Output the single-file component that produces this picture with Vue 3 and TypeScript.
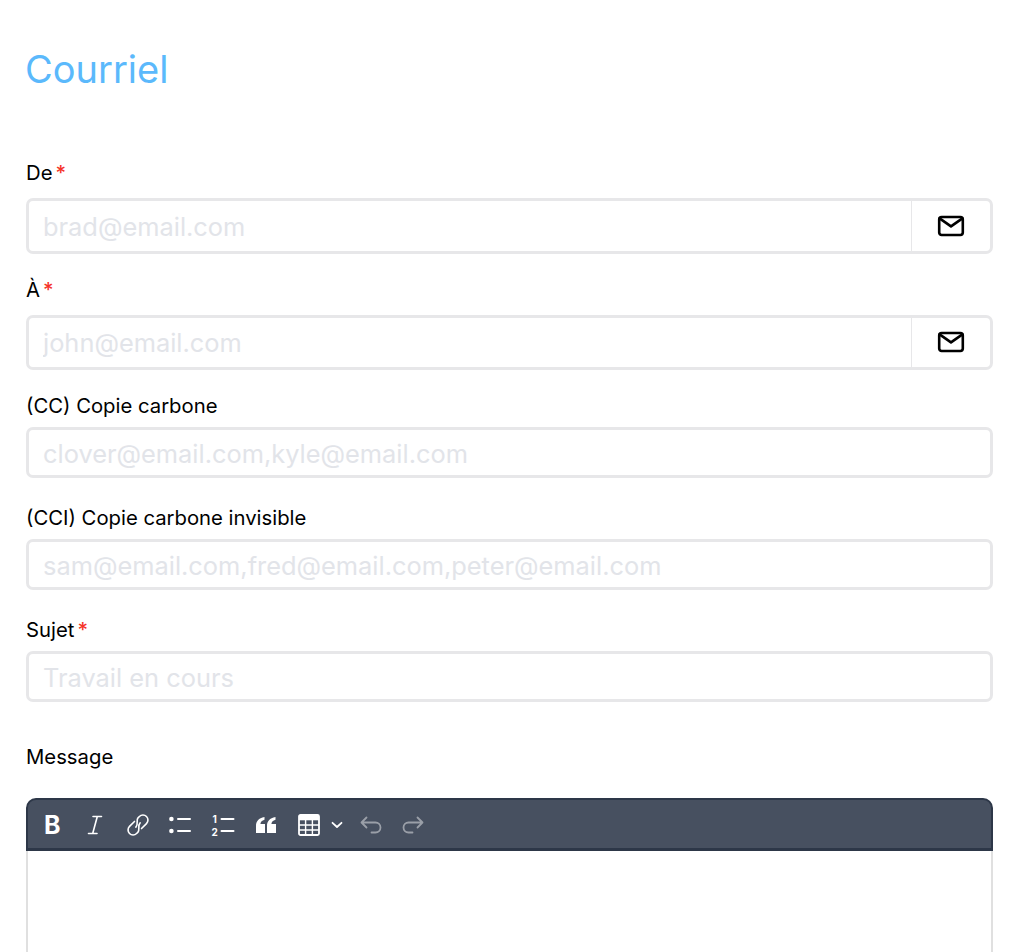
<template>
  <div class="page">
    <h1 class="title">Courriel</h1>
    <form class="form" @submit.prevent>
      <div v-for="field in fields" :key="field.label" class="field" :class="{ 'field-mail': field.mail }">
        <label class="label">{{ field.label }}<span v-if="field.required" class="required">*</span></label>
        <div class="control">
          <input class="input" type="text" :placeholder="field.placeholder">
          <span v-if="field.mail" class="addon">
            <svg width="28" height="22" viewBox="0 0 28 22" fill="none" stroke="#000" stroke-width="2.6" stroke-linejoin="round" stroke-linecap="round">
              <rect x="2.2" y="2" width="23.6" height="18" rx="2.4" />
              <path d="M2.6 3.4 14 11.4 25.4 3.4" />
            </svg>
          </span>
        </div>
      </div>
      <div class="editor-field">
        <label class="label">Message</label>
        <div class="editor">
          <div class="toolbar">
            <button type="button" class="tool tool-bold">B</button>
            <button type="button" class="tool">
              <svg width="22" height="22" viewBox="0 0 22 22" fill="none" stroke="#fff" stroke-width="1.6" stroke-linecap="round">
                <path d="M9 2.5h8.5M4.5 19.5H13M13.3 2.5 8.7 19.5" />
              </svg>
            </button>
            <button type="button" class="tool tool-link">
              <svg width="22" height="22" viewBox="0 0 22 22" fill="none" stroke="#fff" stroke-width="1.6" stroke-linecap="round" stroke-linejoin="round">
                <g transform="rotate(45 11 11)">
                  <path d="M16 11V4A5 5 0 0 0 6 4V6C6 9 11 10 11 14" />
                  <path d="M6 11V18A5 5 0 0 0 16 18V16C16 13 11 12 11 8" />
                </g>
              </svg>
            </button>
            <button type="button" class="tool">
              <svg width="24" height="18" viewBox="0 0 24 18" fill="#fff" stroke="none">
                <circle cx="3.4" cy="3" r="2.3" />
                <circle cx="3.4" cy="15" r="2.3" />
                <rect x="9" y="2" width="14" height="2" rx="1" />
                <rect x="9" y="14" width="14" height="2" rx="1" />
              </svg>
            </button>
            <button type="button" class="tool">
              <svg width="24" height="26" viewBox="0 0 24 26" fill="#fff" stroke="none">
                <text x="1.5" y="11" class="num">1</text>
                <text x="0.5" y="23.5" class="num">2</text>
                <rect x="9.5" y="6" width="14" height="2" rx="1" />
                <rect x="9.5" y="18" width="14" height="2" rx="1" />
              </svg>
            </button>
            <button type="button" class="tool tool-quote">
              <svg width="22" height="18" viewBox="0 0 22 18" fill="#fff" stroke="none">
                <path d="M1 10C1 5.5 3.5 2 9.5 1v2.8C7 4.5 5.6 6 5.4 8H10V17H1Z" />
                <path d="M12 10C12 5.5 14.5 2 20.5 1v2.8C18 4.5 16.6 6 16.4 8H21V17H12Z" />
              </svg>
            </button>
            <button type="button" class="tool tool-table">
              <svg width="22" height="22" viewBox="0 0 22 22" fill="none" stroke="#fff" stroke-width="1.4">
                <rect x="1" y="1" width="20" height="20" rx="1.5" stroke-width="1.8" />
                <path d="M1 3.8h20" stroke-width="5" />
                <path d="M1 11h20M1 16h20M7.6 6v15M14.4 6v15" />
              </svg>
              <svg width="12" height="8" viewBox="0 0 12 8" fill="none" stroke="#fff" stroke-width="1.8" stroke-linecap="round" stroke-linejoin="round">
                <path d="M1.5 1.8 6 6 10.5 1.8" />
              </svg>
            </button>
            <button type="button" class="tool tool-off">
              <svg width="22" height="18" viewBox="0 0 22 18" fill="none" stroke="#fff" stroke-width="1.8" stroke-linecap="round" stroke-linejoin="round">
                <path d="M6.5 1.5 1.5 6.5 6.5 11.5M1.5 6.5H15.5a5 5 0 0 1 0 10H11.5" />
              </svg>
            </button>
            <button type="button" class="tool tool-off">
              <svg width="22" height="18" viewBox="0 0 22 18" fill="none" stroke="#fff" stroke-width="1.8" stroke-linecap="round" stroke-linejoin="round">
                <path d="M15.5 1.5 20.5 6.5 15.5 11.5M20.5 6.5H6.5a5 5 0 0 0 0 10H10.5" />
              </svg>
            </button>
          </div>
          <div class="content"></div>
        </div>
      </div>
    </form>
  </div>
</template>

<script setup lang="ts">
interface Field {
  label: string
  placeholder: string
  required?: boolean
  mail?: boolean
}

const fields: Field[] = [
  { label: 'De', placeholder: 'brad@email.com', required: true, mail: true },
  { label: 'À', placeholder: 'john@email.com', required: true, mail: true },
  { label: '(CC) Copie carbone', placeholder: 'clover@email.com,kyle@email.com' },
  { label: '(CCI) Copie carbone invisible', placeholder: 'sam@email.com,fred@email.com,peter@email.com' },
  { label: 'Sujet', placeholder: 'Travail en cours', required: true },
]
</script>

<style>
body {
  background: #fff;
}
</style>

<style scoped>
.page {
  height: 952px;
  overflow: hidden;
  box-sizing: border-box;
  padding: 47px 31px 0 26px;
  font-family: Inter, "Liberation Sans", sans-serif;
  color: #000;
}

.title {
  margin: 0 0 0 -1px;
  font-size: 38px;
  line-height: 44px;
  font-weight: 400;
  color: #5bb9fc;
}

.form {
  margin-top: 70px;
  display: flex;
  flex-direction: column;
  gap: 24px;
}

.field {
  display: flex;
  flex-direction: column;
  gap: 9px;
  padding-bottom: 4px;
}

.field-mail {
  gap: 13px;
  padding-bottom: 0;
}

.label {
  display: block;
  font-size: 20.3px;
  line-height: 24px;
  font-weight: 400;
}

.required {
  margin-left: 3px;
  color: #f5332a;
  font-weight: 500;
}

.control {
  display: flex;
  height: 51px;
  box-sizing: border-box;
  border: 3px solid #e7e7e9;
  border-radius: 7px;
  background: #fff;
}

.field-mail .control {
  height: 55.5px;
}

.input {
  flex: 1;
  min-width: 0;
  border: none;
  outline: none;
  padding: 1px 14px 0;
  background: transparent;
  font-family: inherit;
  font-size: 25.4px;
}

.input::placeholder {
  color: #e2e4e9;
  opacity: 1;
}

.addon {
  width: 78px;
  display: flex;
  align-items: center;
  justify-content: center;
  border-left: 1px solid #e7e7e9;
}

.editor-field {
  margin-top: 15px;
  display: flex;
  flex-direction: column;
  gap: 29px;
}

.editor {
  display: flex;
  flex-direction: column;
}

.toolbar {
  display: flex;
  align-items: center;
  height: 53px;
  box-sizing: border-box;
  padding: 1px 0 0 3px;
  background: #475060;
  border: 2px solid #2d3748;
  border-bottom-width: 3px;
  border-radius: 10px 10px 0 0;
}

.tool {
  width: 42.6px;
  height: 100%;
  flex: none;
  padding: 0;
  display: flex;
  align-items: center;
  justify-content: center;
  gap: 11px;
  border: none;
  background: none;
  color: #fff;
  font-family: inherit;
}

.tool-bold {
  font-size: 25px;
  font-weight: 700;
}

.tool-link,
.tool-quote {
  padding-left: 2px;
}

.tool-table {
  width: 63px;
  padding-left: 4px;
}

.tool-off {
  opacity: 0.45;
}

.num {
  font-family: Inter, "Liberation Sans", sans-serif;
  font-size: 10px;
  font-weight: 700;
}

.content {
  height: 300px;
  border: 2px solid #e0e0e0;
  border-top: none;
  background: #fff;
}
</style>
